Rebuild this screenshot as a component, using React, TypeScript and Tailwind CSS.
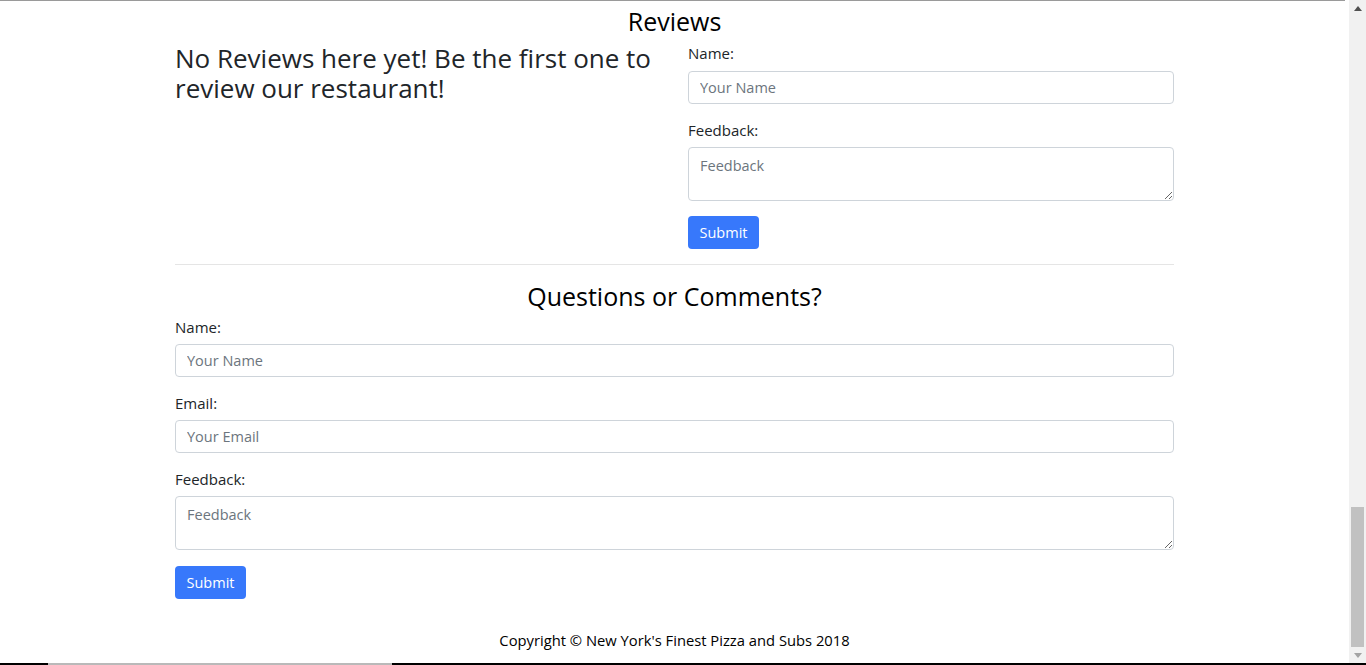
import React from "react";

const font = { fontFamily: '"Comic Sans MS", "Open Sans", sans-serif' };

function Label({ children, mb = "mb-[5px]" }: { children: React.ReactNode; mb?: string }) {
  return <div className={`h-6 ${mb} text-[15px] leading-6 text-[#212529]`}>{children}</div>;
}

function Input({ placeholder }: { placeholder: string }) {
  return (
    <input
      placeholder={placeholder}
      className="block w-full h-[33px] mb-[14px] pl-[11px] pr-3 rounded-[4px] border border-[#ced4da] text-[14.5px] text-[#495057] placeholder:text-[#6c757d] outline-none"
    />
  );
}

function TextArea({ placeholder, mb }: { placeholder: string; mb: string }) {
  return (
    <textarea
      placeholder={placeholder}
      className={`block w-full h-[54px] ${mb} pl-[11px] pr-3 py-[6px] rounded-[4px] border border-[#ced4da] text-[14.5px] leading-6 text-[#495057] placeholder:text-[#6c757d] outline-none resize-y`}
    />
  );
}

function Submit() {
  return (
    <button className="h-[33px] w-[71px] rounded-[4px] bg-[#3778fb] text-white text-[14.5px] leading-6">
      Submit
    </button>
  );
}

export default function App() {
  return (
    <div className="w-[1366px] h-[665px] flex flex-col overflow-hidden bg-white" style={font}>
      <div className="flex flex-1 min-h-0">
        <div className="flex-1 flex flex-col min-w-0">
          <div className="h-px bg-[#9a9a9a] mr-[4px]" />
          <div className="w-[999px] mx-auto flex flex-col">
            <h2 className="mt-[3px] h-[34px] text-center text-[25px] leading-[34px] text-black">Reviews</h2>
            <div className="flex gap-[28px] mt-[3px]">
              <div className="flex-1 pt-[2px]">
                <p className="text-[26px] leading-[30px] text-[#212529]">
                  No Reviews here yet! Be the first one to review our restaurant!
                </p>
              </div>
              <div className="w-[486px]">
                <Label mb="mb-[6px]">Name:</Label>
                <Input placeholder="Your Name" />
                <Label>Feedback:</Label>
                <TextArea placeholder="Feedback" mb="mb-[15px]" />
                <Submit />
              </div>
            </div>
            <div className="h-px bg-[#e5e5e5] mt-[15px]" />
            <h2 className="mt-[14px] h-[34px] text-center text-[25px] leading-[34px] text-black">
              Questions or Comments?
            </h2>
            <div className="mt-[2px]">
              <Label>Name:</Label>
              <Input placeholder="Your Name" />
              <Label>Email:</Label>
              <Input placeholder="Your Email" />
              <Label>Feedback:</Label>
              <TextArea placeholder="Feedback" mb="mb-[16px]" />
              <Submit />
            </div>
            <div className="mt-[30px] text-center text-[14.75px] leading-[22px] text-black">
              Copyright © New York's Finest Pizza and Subs 2018
            </div>
          </div>
        </div>
        <div className="w-[17px] bg-[#f1f1f1] flex flex-col items-center">
          <div className="h-[17px] flex items-center justify-center">
            <svg width="8" height="5" viewBox="0 0 8 5"><path d="M0 5 L4 0 L8 5 Z" fill="#505050" /></svg>
          </div>
          <div className="flex-1" />
          <div className="w-[13px] h-[140px] bg-[#c1c1c1]" />
          <div className="h-[16px] flex items-center justify-center">
            <svg width="8" height="5" viewBox="0 0 8 5"><path d="M0 0 L4 5 L8 0 Z" fill="#a3a3a3" /></svg>
          </div>
        </div>
      </div>
      <div className="h-[2px] flex">
        <div className="w-[48px] bg-black" />
        <div className="w-[344px] bg-[#b9b9b9]" />
        <div className="flex-1 bg-black" />
      </div>
    </div>
  );
}
